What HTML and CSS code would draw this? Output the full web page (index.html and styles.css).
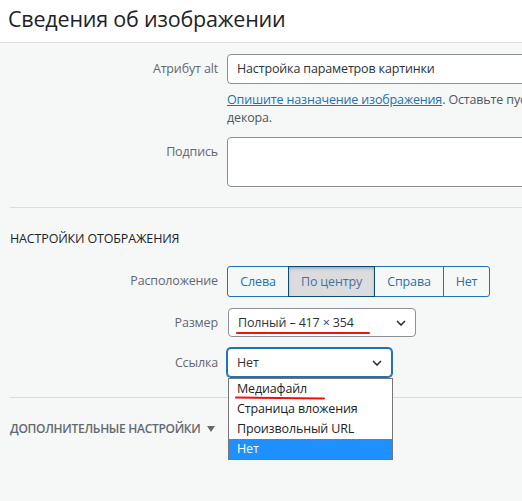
FILE: index.html
```html
<!DOCTYPE html>
<html lang="ru">
<head>
<meta charset="utf-8">
<title>Сведения об изображении</title>
<link rel="stylesheet" href="styles.css">
</head>
<body>
<header class="head">
  <h2 class="title">Сведения об изображении</h2>
</header>
<main class="panel">
  <div class="row">
    <label class="lbl">Атрибут alt</label>
    <div class="ctl">
      <div class="field">Настройка параметров картинки</div>
      <p class="help"><a class="link" href="#">Опишите назначение изображения</a>. Оставьте пустым, если изображение является только элементом<br>декора.</p>
    </div>
  </div>
  <div class="row row-caption">
    <label class="lbl">Подпись</label>
    <div class="ctl">
      <div class="area"></div>
    </div>
  </div>

  <hr class="divider">
  <h3 class="section">НАСТРОЙКИ ОТОБРАЖЕНИЯ</h3>

  <div class="row row-align">
    <label class="lbl">Расположение</label>
    <div class="ctl">
      <div class="btn-group">
        <span class="btn btn-left">Слева</span>
        <span class="btn btn-center active">По центру</span>
        <span class="btn btn-right">Справа</span>
        <span class="btn btn-none">Нет</span>
      </div>
    </div>
  </div>

  <div class="row row-size">
    <label class="lbl">Размер</label>
    <div class="ctl">
      <div class="select select-size">
        <span class="marked marked-size">Полный – 417 × 354</span>
        <svg class="chev" width="10" height="6" viewBox="0 0 10 6"><path d="M1 1l4 4 4-4" fill="none" stroke="#2c3338" stroke-width="1.6"/></svg>
      </div>
    </div>
  </div>

  <div class="row row-link">
    <label class="lbl">Ссылка</label>
    <div class="ctl">
      <div class="select select-link">
        <span>Нет</span>
        <svg class="chev" width="10" height="6" viewBox="0 0 10 6"><path d="M1 1l4 4 4-4" fill="none" stroke="#2c3338" stroke-width="1.6"/></svg>
        <ul class="menu">
          <li class="opt"><span class="marked marked-media">Медиафайл</span></li>
          <li class="opt">Страница вложения</li>
          <li class="opt">Произвольный URL</li>
          <li class="opt opt-selected">Нет</li>
        </ul>
      </div>
    </div>
  </div>

  <hr class="divider">
  <div class="advanced">ДОПОЛНИТЕЛЬНЫЕ НАСТРОЙКИ <svg class="tri" width="8" height="6" viewBox="0 0 8 6"><path d="M0 0h8L4 6z" fill="#646970"/></svg></div>
</main>
</body>
</html>
```

FILE: styles.css
```css
html, body {
  margin: 0;
  padding: 0;
  overflow: hidden;
}
body {
  width: 522px;
  height: 501px;
  background: #f6f7f7;
  font-family: "Open Sans", "Noto Sans", sans-serif;
  font-size: 12.5px;
  letter-spacing: -0.15px;
  color: #2c3338;
}
.head {
  height: 42px;
  background: #fff;
  border-bottom: 1px solid #dcdcde;
}
.title {
  margin: 0;
  padding-left: 8px;
  font-size: 21.5px;
  letter-spacing: -0.2px;
  font-weight: 400;
  line-height: 38px;
  color: #1d2327;
  white-space: nowrap;
}
.panel {
  padding-top: 11px;
}
.row {
  display: grid;
  grid-template-columns: 218px 360px;
  column-gap: 9px;
  align-items: start;
}
.lbl {
  line-height: 30px;
  text-align: right;
  color: #646970;
  white-space: nowrap;
}
.field {
  box-sizing: border-box;
  height: 30px;
  line-height: 28px;
  padding: 0 9px;
  background: #fff;
  border: 1px solid #8c8f94;
  border-radius: 4px;
  white-space: nowrap;
}
.help {
  margin: 7px 0 0;
  line-height: 18px;
  color: #50575e;
  white-space: nowrap;
}
.link {
  color: #2271b1;
  text-decoration: underline;
}
.row-caption {
  margin-top: 10px;
}
.area {
  box-sizing: border-box;
  height: 50px;
  background: #fff;
  border: 1px solid #8c8f94;
  border-radius: 4px;
}
.divider {
  margin: 20px 0 0 10px;
  border: 0;
  border-top: 1px solid #dcdcde;
  height: 0;
}
.section {
  margin: 21px 0 0 10px;
  font-size: 12.5px;
  font-weight: 400;
  line-height: 20px;
  color: #1d2327;
}
.row-align {
  margin-top: 17px;
}
.btn-group {
  display: inline-flex;
  height: 31px;
}
.btn {
  box-sizing: border-box;
  display: flex;
  align-items: center;
  justify-content: center;
  height: 31px;
  padding: 0;
  white-space: nowrap;
  border: 1px solid #2271b1;
  margin-left: -1px;
  color: #2271b1;
  background: #f6f7f7;
}
.btn-left {
  margin-left: 0;
  width: 62px;
  border-radius: 3px 0 0 3px;
}
.btn-center { width: 87px; }
.btn-right { width: 70px; }
.btn-none {
  width: 47px;
  border-radius: 0 3px 3px 0;
}
.btn.active {
  background: #dcdcde;
  border-color: #0a4b78;
  color: #4a7199;
  box-shadow: inset 0 2px 5px -3px #0a4b78;
  position: relative;
  z-index: 1;
}
.row-size {
  margin-top: 11px;
}
.row-size .lbl,
.row-link .lbl {
  line-height: 29px;
}
.select {
  box-sizing: border-box;
  position: relative;
  display: flex;
  align-items: center;
  justify-content: space-between;
  height: 29px;
  padding: 0 9px 0 9px;
  background: #fff;
  border: 1px solid #8c8f94;
  border-radius: 4px;
  white-space: nowrap;
}
.select-size {
  width: 188px;
  margin-left: 1px;
}
.row-link {
  margin-top: 11px;
}
.select-link {
  width: 165px;
  border-color: #2271b1;
  box-shadow: 0 0 0 1px #2271b1;
}
.marked {
  position: relative;
}
.marked::after {
  content: "";
  position: absolute;
  left: -2px;
  height: 2px;
  background: #f01010;
  border-radius: 1px;
}
.marked-size::after {
  width: 134px;
  bottom: -3px;
}
.marked-media::after {
  width: 90px;
  bottom: -2px;
  transform: rotate(0.6deg);
}
.menu {
  position: absolute;
  left: 0;
  top: 29px;
  width: 165px;
  box-sizing: border-box;
  margin: 0;
  padding: 0;
  list-style: none;
  background: #fff;
  border: 1px solid #767676;
  z-index: 5;
}
.opt {
  height: 20px;
  line-height: 20px;
  padding-left: 8px;
  color: #1d2327;
}
.opt-selected {
  background: #1e90ff;
  color: #fff;
}
.advanced {
  margin: 20px 0 0 10px;
  line-height: 21px;
  font-size: 12px;
  letter-spacing: -0.3px;
  font-weight: 600;
  color: #646970;
  display: flex;
  align-items: center;
  gap: 7px;
}
.tri {
  display: block;
}
```
